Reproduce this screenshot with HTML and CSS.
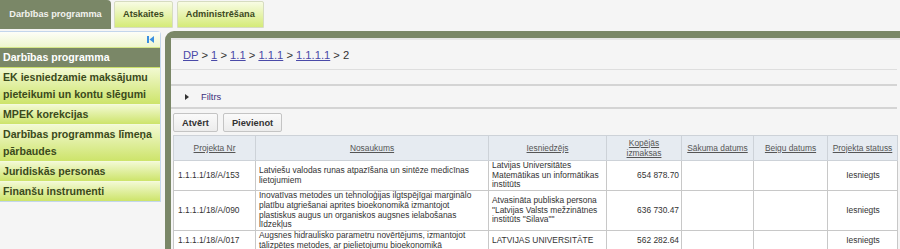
FILE: index.html
```html
<!DOCTYPE html>
<html lang="lv">
<head>
<meta charset="utf-8">
<title>Darbības programma</title>
<link rel="stylesheet" href="styles.css">
</head>
<body>
<div class="tabs">
  <div class="tab active">Darbības programma</div>
  <div class="tab">Atskaites</div>
  <div class="tab">Administrēšana</div>
</div>
<div class="layout">
  <aside class="sidebar">
    <div class="side-head">
      <svg class="collapse" width="7" height="7" viewBox="0 0 7 7"><rect x="0" y="0" width="2" height="7" fill="#3b8fe0"/><polygon points="7,0 7,7 2.5,3.5" fill="#3b8fe0"/></svg>
    </div>
    <ul class="menu">
      <li class="active">Darbības programma</li>
      <li>EK iesniedzamie maksājumu pieteikumi un kontu slēgumi</li>
      <li>MPEK korekcijas</li>
      <li>Darbības programmas līmeņa pārbaudes</li>
      <li>Juridiskās personas</li>
      <li>Finanšu instrumenti</li>
    </ul>
  </aside>
  <main class="panel">
    <div class="inner">
      <div class="crumbs"><a href="#">DP</a> &gt; <a href="#">1</a> &gt; <a href="#">1.1</a> &gt; <a href="#">1.1.1</a> &gt; <a href="#">1.1.1.1</a> &gt; 2</div>
      <div class="spacer"></div>
      <div class="filter"><svg class="tri" width="4" height="6" viewBox="0 0 4 6"><polygon points="0,0 4,3 0,6" fill="#333"/></svg><span>Filtrs</span></div>
      <div class="toolbar">
        <button class="btn">Atvērt</button>
        <button class="btn">Pievienot</button>
      </div>
      <table class="grid">
        <colgroup>
          <col class="c1"><col class="c2"><col class="c3"><col class="c4"><col class="c5"><col class="c6"><col class="c7">
        </colgroup>
        <thead>
          <tr>
            <th><a href="#">Projekta Nr</a></th>
            <th><a href="#">Nosaukums</a></th>
            <th><a href="#">Iesniedzējs</a></th>
            <th><a href="#">Kopējās izmaksas</a></th>
            <th><a href="#">Sākuma datums</a></th>
            <th><a href="#">Beigu datums</a></th>
            <th><a href="#">Projekta statuss</a></th>
          </tr>
        </thead>
        <tbody>
          <tr>
            <td>1.1.1.1/18/A/153</td>
            <td>Latviešu valodas runas atpazīšana un sintēze medicīnas lietojumiem</td>
            <td>Latvijas Universitātes Matemātikas un informātikas institūts</td>
            <td class="num">654 878.70</td>
            <td></td>
            <td></td>
            <td class="center">Iesniegts</td>
          </tr>
          <tr>
            <td>1.1.1.1/18/A/090</td>
            <td>Inovatīvas metodes un tehnoloģijas ilgtspējīgai marginālo platību atgriešanai aprites bioekonomikā izmantojot plastiskus augus un organiskos augsnes ielabošanas līdzekļus</td>
            <td>Atvasināta publiska persona "Latvijas Valsts mežzinātnes institūts "Silava""</td>
            <td class="num">636 730.47</td>
            <td></td>
            <td></td>
            <td class="center">Iesniegts</td>
          </tr>
          <tr>
            <td>1.1.1.1/18/A/017</td>
            <td>Augsnes hidraulisko parametru novērtējums, izmantojot tālizpētes metodes, ar pielietojumu bioekonomikā</td>
            <td>LATVIJAS UNIVERSITĀTE</td>
            <td class="num">562 282.64</td>
            <td></td>
            <td></td>
            <td class="center">Iesniegts</td>
          </tr>
        </tbody>
      </table>
    </div>
  </main>
</div>
</body>
</html>
```

FILE: styles.css
```css
html, body {
  margin: 0;
  padding: 0;
}
body {
  background: #f5f5f5;
  font-family: "Liberation Sans", Arial, sans-serif;
  color: #333;
  height: 249px;
  overflow: hidden;
}

/* top tabs */
.tabs {
  display: flex;
  align-items: flex-start;
  gap: 3px;
  height: 29px;
}
.tab {
  box-sizing: border-box;
  height: 27px;
  margin-top: 1px;
  padding: 0 8px;
  line-height: 25px;
  font-size: 9.2px;
  font-weight: bold;
  color: #3d4a22;
  background: linear-gradient(#f8fce4, #d5eb78);
  border: 1px solid #d6dcc0;
  border-radius: 2px 2px 0 0;
  white-space: nowrap;
}
.tab + .tab + .tab {
  margin-left: 1px;
}
.tab.active {
  height: 29px;
  margin-top: 0;
  width: 111px;
  line-height: 28px;
  text-align: center;
  color: #f2f2ee;
  background: #7a8767;
  border: none;
  border-radius: 0 4px 0 0;
}

/* layout */
.layout {
  display: flex;
  gap: 4px;
  margin-top: 2px;
}

/* sidebar */
.sidebar {
  box-sizing: border-box;
  width: 161px;
  flex: none;
  align-self: flex-start;
  border: 1px solid #c3d6ec;
  border-left: none;
  border-radius: 0 4px 0 0;
  background: #fafafa;
}
.side-head {
  height: 15px;
  display: flex;
  justify-content: flex-end;
  align-items: center;
  padding-right: 6px;
  background: linear-gradient(#fdfef8, #eef6cf);
  border-bottom: 1px solid #d4e68a;
}
.collapse {
  display: block;
}
.menu {
  list-style: none;
  margin: 0;
  padding: 0;
}
.menu li {
  padding: 1px 3px;
  line-height: 17px;
  font-size: 10.6px;
  font-weight: bold;
  color: #3b4a1c;
  background: linear-gradient(#f2f9d2, #cde46a);
  border-bottom: 1px solid #f4fadc;
}
.menu li.active {
  color: #fff;
  background: #7a8767;
  border-bottom: 1px solid #c9de6a;
}
.menu li:last-child {
  border-bottom: none;
}

/* main panel */
.panel {
  flex: 1;
  min-width: 0;
  height: 240px;
  background: #7a8767;
  border-radius: 9px 0 0 0;
  padding: 7px 0 0 6px;
  box-sizing: border-box;
}
.inner {
  background: #f5f5f5;
  height: 100%;
  border-top: 2px solid #e6e6e6;
  box-sizing: border-box;
  padding-right: 3px;
}
.crumbs {
  height: 29px;
  line-height: 30px;
  padding-left: 12px;
  font-size: 11.2px;
  color: #333;
  border-bottom: 1px solid #dedede;
}
.crumbs a {
  color: #4a4aa8;
  text-decoration: underline;
}
.spacer {
  height: 14px;
  border-bottom: 2px solid #d4d4d4;
}
.filter {
  height: 21px;
  display: flex;
  align-items: center;
  gap: 12px;
  padding-left: 14px;
  font-size: 9.3px;
  color: #3e2f7c;
  border-bottom: 2px solid #d4d4d4;
}
.tri {
  display: block;
}
.toolbar {
  display: flex;
  gap: 5px;
  padding: 4px 0 3px 2px;
}
.btn {
  height: 19px;
  padding: 0 8px;
  font-family: "Liberation Sans", Arial, sans-serif;
  font-size: 9.3px;
  font-weight: bold;
  color: #333;
  background: linear-gradient(#fafafa, #ececec);
  border: 1px solid #c4c4c4;
  border-radius: 2px;
}

/* grid */
.grid {
  margin-left: 2px;
  width: 724px;
  table-layout: fixed;
  border-collapse: collapse;
  font-size: 8.4px;
  color: #333;
}
.c1 { width: 82px; }
.c2 { width: 233px; }
.c3 { width: 118px; }
.c4 { width: 75px; }
.c5 { width: 72px; }
.c6 { width: 74px; }
.c7 { width: 70px; }
.grid th {
  height: 24px;
  padding: 0 4px;
  font-weight: normal;
  line-height: 10.5px;
  background: #e6ebf1;
  border: 1px solid #cdd2d8;
  text-align: center;
}
.grid th a {
  color: #555;
  text-decoration: underline;
}
.grid td {
  padding: 0 2px 0 3px;
  line-height: 9.7px;
  background: #fff;
  border: 1px solid #c8c8c8;
  vertical-align: middle;
}
.grid td:first-child {
  padding-left: 4px;
}
.grid td.num {
  text-align: right;
  padding-right: 2px;
}
.grid td.center {
  text-align: center;
}
```
